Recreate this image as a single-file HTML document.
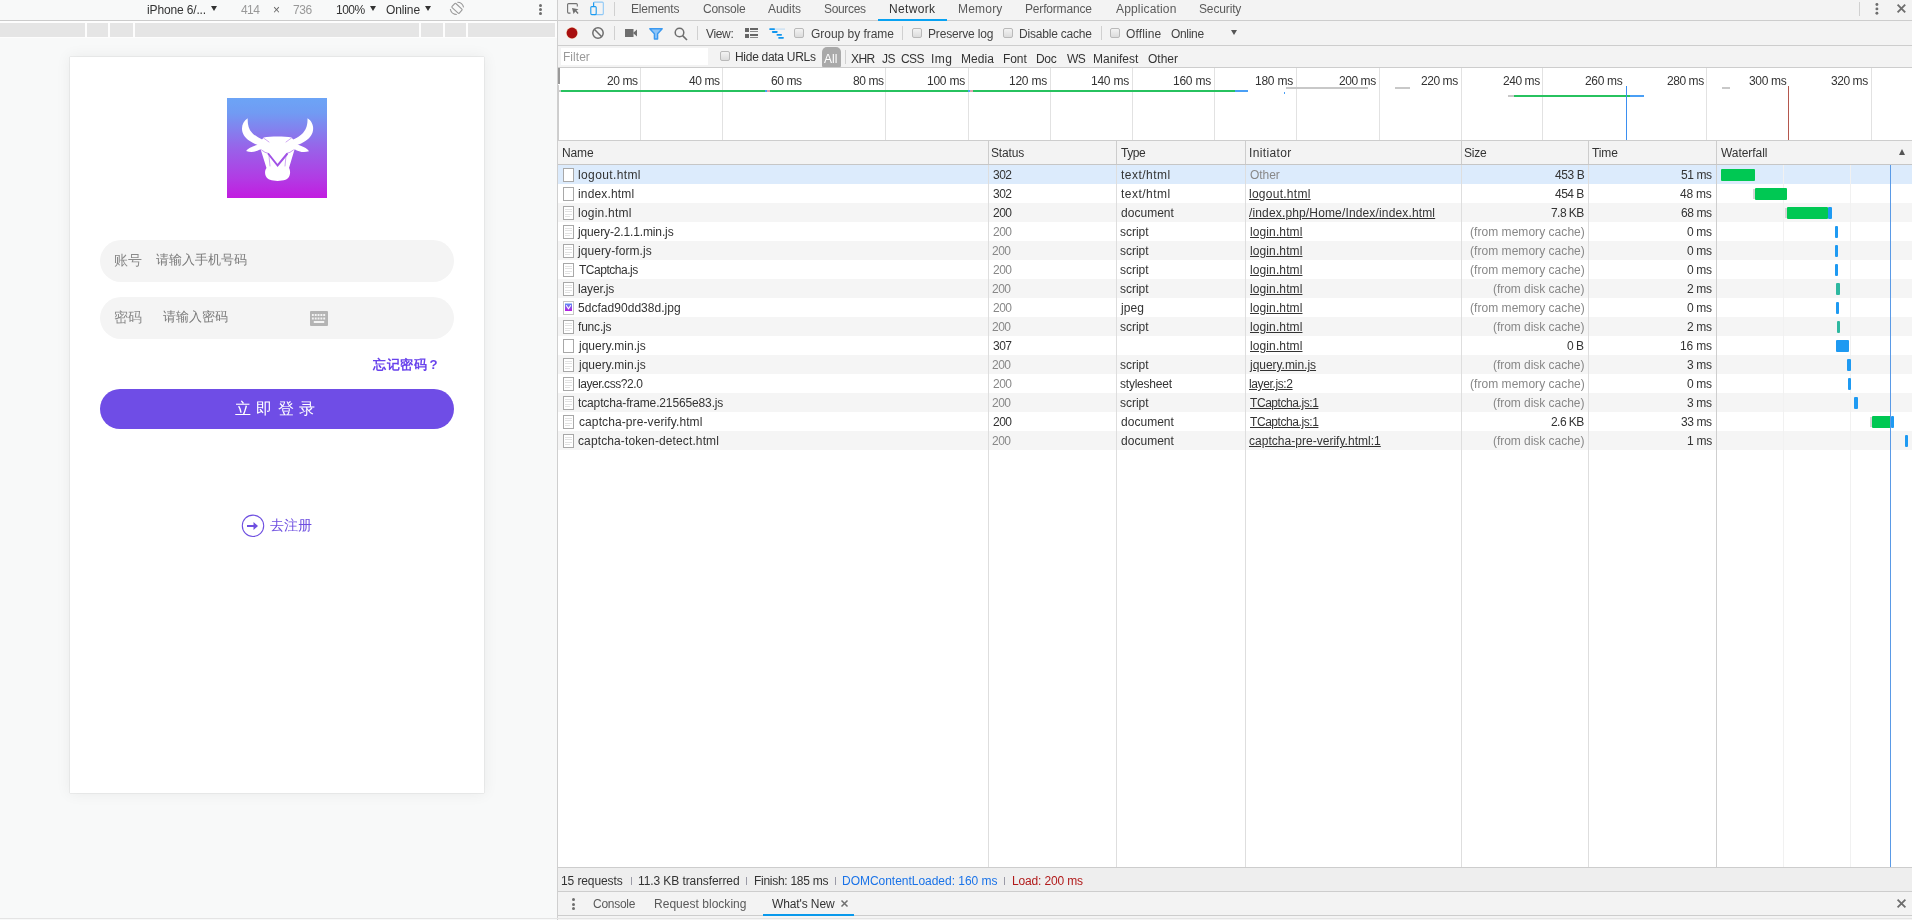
<!DOCTYPE html><html><head><meta charset="utf-8"><style>
html,body{margin:0;padding:0;width:1912px;height:920px;overflow:hidden;background:#f8f9f9;}
body{position:relative;font-family:"Liberation Sans",sans-serif;}
.t{position:absolute;white-space:nowrap;line-height:14px;font-size:12px;will-change:transform;}
.b{position:absolute;}
svg{position:absolute;}
u{text-decoration:underline;}
</style></head><body>
<div class="b" style="left:0px;top:0px;width:557px;height:920px;background:#f8f9f9"></div>
<div class="b" style="left:0px;top:20px;width:557px;height:1px;background:#cbcbcb"></div>
<div class="b" style="left:0px;top:21px;width:557px;height:17px;background:#fdfdfd"></div>
<div class="b" style="left:0px;top:23px;width:85px;height:14px;background:#e5e5e5"></div>
<div class="b" style="left:87px;top:23px;width:21px;height:14px;background:#e5e5e5"></div>
<div class="b" style="left:110px;top:23px;width:23px;height:14px;background:#e5e5e5"></div>
<div class="b" style="left:135px;top:23px;width:284px;height:14px;background:#e5e5e5"></div>
<div class="b" style="left:421px;top:23px;width:22px;height:14px;background:#e5e5e5"></div>
<div class="b" style="left:445px;top:23px;width:21px;height:14px;background:#e5e5e5"></div>
<div class="b" style="left:468px;top:23px;width:87px;height:14px;background:#e5e5e5"></div>
<div class="t" style="left:146.90px;top:3px;color:#333;font-size:12px;letter-spacing:-0.145px;">iPhone 6/...</div>
<div class="b" style="left:211px;top:6px;width:0;height:0;border-left:3.0px solid transparent;border-right:3.0px solid transparent;border-top:5px solid #333"></div>
<div class="t" style="left:241.00px;top:3px;color:#999;font-size:12px;letter-spacing:-0.550px;">414</div>
<div class="t" style="left:273.00px;top:3px;color:#666;font-size:12px;">&#215;</div>
<div class="t" style="left:292.80px;top:3px;color:#999;font-size:12px;letter-spacing:-0.400px;">736</div>
<div class="t" style="left:335.70px;top:3px;color:#333;font-size:12px;letter-spacing:-0.517px;">100%</div>
<div class="b" style="left:370px;top:6px;width:0;height:0;border-left:3.0px solid transparent;border-right:3.0px solid transparent;border-top:5px solid #333"></div>
<div class="t" style="left:385.80px;top:3px;color:#333;font-size:12px;letter-spacing:-0.120px;">Online</div>
<div class="b" style="left:425px;top:6px;width:0;height:0;border-left:3.0px solid transparent;border-right:3.0px solid transparent;border-top:5px solid #333"></div>
<svg style="left:446px;top:0px" width="22" height="18" viewBox="0 0 22 18"><g fill="none" stroke="#9a9a9a" stroke-width="1.1"><rect x="6.1" y="5.55" width="9.8" height="5.5" rx="0.8" transform="rotate(42.6 11 8.3)"/><path d="M11.3 2.2 A6.5 6.5 0 0 1 17.6 7.4 M4.3 9.2 A6.5 6.5 0 0 0 10.8 14.5"/></g></svg>
<div class="b" style="left:539px;top:4px;width:3px;height:3px;background:#6e6e6e;border-radius:50%"></div>
<div class="b" style="left:539px;top:8px;width:3px;height:3px;background:#6e6e6e;border-radius:50%"></div>
<div class="b" style="left:539px;top:12px;width:3px;height:3px;background:#6e6e6e;border-radius:50%"></div>
<div class="b" style="left:70px;top:57px;width:414px;height:736px;background:#fff;box-shadow:0 0 1px 0 rgba(0,0,0,0.25),0 0 14px 1px rgba(0,0,0,0.06)"></div>
<svg style="left:227px;top:98px" width="100" height="100" viewBox="0 0 100 100">
<defs><linearGradient id="lg" x1="0" y1="0" x2="0" y2="1"><stop offset="0" stop-color="#6ca4f6"/><stop offset="0.15" stop-color="#719bf3"/><stop offset="0.5" stop-color="#9863e9"/><stop offset="0.8" stop-color="#b13ce4"/><stop offset="1" stop-color="#c21ce0"/></linearGradient></defs>
<rect width="100" height="100" fill="url(#lg)"/>
<g fill="#fff">
<path d="M20.7 20.3 C13 25 12.5 37 22.8 43.1 C28 46.5 35 49 44 51 L46 45.5 C38 43 30 40 25.2 34.9 C21.5 31 20.5 26 20.7 20.3 Z"/>
<path d="M80.5 20.3 C88.2 25 88.7 37 78.4 43.1 C73.2 46.5 66.2 49 57.2 51 L55.2 45.5 C63.2 43 71.2 40 76 34.9 C79.7 31 80.7 26 80.5 20.3 Z"/>
<path d="M36.6 39.5 C44 38.2 57 38.2 64.6 39.5 L70 46.5 C75 48 80 50 82 53.3 C77 54.8 72 54 67.6 51.2 L62 70 C64 73 63.5 80 58.5 81.8 C54 83.3 47 83.3 43 81.8 C37.5 80 37 73 39.5 70 L33.6 51.2 C29 54 24 54.8 19.1 53 C21 50 26 48 31.2 46.5 Z"/>
</g>
<g fill="none" stroke="#a152e6" stroke-linecap="round">
<path d="M41.5 56 L50.6 67.5 L60 56" stroke-width="2"/>
<path d="M34.5 52 Q38 55 41.5 55.5 M66.5 52 Q63 55 59.5 55.5" stroke-width="0.6"/>
<path d="M42 58 L43 68 M59 58 L58 68" stroke-width="0.5"/>
<path d="M36.5 40 L42 44 M64.5 40 L59 44" stroke-width="0.5"/>
</g>
</svg>
<div class="b" style="left:100px;top:240px;width:354px;height:42px;background:#f4f4f4;border-radius:21px"></div>
<div class="b" style="left:100px;top:297px;width:354px;height:42px;background:#f4f4f4;border-radius:21px"></div>
<div class="t" style="left:114px;top:251px;font-size:14px;line-height:18px;color:#8a8a8a">账号</div>
<div class="t" style="left:156px;top:251px;font-size:14px;line-height:18px;color:#7a7a7a;font-size:13.4px">请输入手机号码</div>
<div class="t" style="left:114px;top:308px;font-size:14px;line-height:18px;color:#8a8a8a">密码</div>
<div class="t" style="left:163px;top:308px;font-size:14px;line-height:18px;color:#7a7a7a;font-size:13.4px">请输入密码</div>
<svg style="left:310px;top:311px" width="18" height="15" viewBox="0 0 19 15" preserveAspectRatio="none"><rect x="0" y="0" width="19" height="15" rx="1" fill="#b4b4b4"/>
<g fill="#f4f4f4"><rect x="2" y="3" width="2" height="2"/><rect x="5" y="3" width="2" height="2"/><rect x="8" y="3" width="2" height="2"/><rect x="11" y="3" width="2" height="2"/><rect x="14" y="3" width="2" height="2"/>
<rect x="2" y="6.5" width="2" height="2"/><rect x="5" y="6.5" width="2" height="2"/><rect x="8" y="6.5" width="2" height="2"/><rect x="11" y="6.5" width="2" height="2"/><rect x="14" y="6.5" width="2" height="2"/>
<rect x="4" y="10" width="11" height="2"/></g></svg>
<div class="t" style="left:373px;top:355.5px;font-size:13.2px;line-height:18px;color:#6842ec;font-weight:bold;letter-spacing:0.6px">忘记密码<span style="margin-left:2px">?</span></div>
<div class="b" style="left:100px;top:389px;width:354px;height:40px;background:#6f4de6;border-radius:20px"></div>
<div class="t" style="left:98px;width:354px;text-align:center;top:399px;font-size:16px;line-height:20px;color:#fff;letter-spacing:5.3px;text-indent:5.3px">立即登录</div>
<svg style="left:241px;top:514px" width="24" height="24" viewBox="0 0 24 24"><circle cx="12" cy="11.8" r="10.7" fill="none" stroke="#6e4fe0" stroke-width="1.1"/><path d="M6 12 H13.5" fill="none" stroke="#6e4fe0" stroke-width="2"/><path d="M12.5 8 L17 12 L12.5 16 Z" fill="#6e4fe0"/></svg>
<div class="t" style="left:270px;top:516px;font-size:14px;line-height:18px;color:#6e4fe0">去注册</div>
<div class="b" style="left:557px;top:0px;width:1px;height:920px;background:#cfcfcf"></div>
<div class="b" style="left:558px;top:0px;width:1354px;height:920px;background:#fff"></div>
<div class="b" style="left:558px;top:0px;width:1354px;height:20px;background:#f3f3f3"></div>
<div class="b" style="left:558px;top:20px;width:1354px;height:1px;background:#cdcdcd"></div>
<svg style="left:560px;top:0px" width="52" height="20" viewBox="0 0 52 20">
<path d="M10.5 13.1 H8.6 Q7.6 13.1 7.6 12.1 V4.6 Q7.6 3.6 8.6 3.6 H16.3 Q17.3 3.6 17.3 4.6 V6.6" fill="none" stroke="#707070" stroke-width="1.1"/>
<path d="M12 7.9 L18.5 9.3 L16.4 10.6 L18.6 13 L17.6 14 L15.3 11.6 L13.6 13.9 Z" fill="#707070"/>
<rect x="33.6" y="2.1" width="9.7" height="12.5" rx="1" fill="none" stroke="#8ec8f6" stroke-width="1.1"/>
<path d="M33.6 6.5 V2.6" stroke="#1a9af0" stroke-width="1.1"/>
<rect x="30.8" y="6.6" width="5.4" height="8" rx="1" fill="#f3f3f3" stroke="#1a9af0" stroke-width="1.1"/>
</svg>
<div class="b" style="left:614px;top:2px;width:1px;height:14px;background:#d0d0d0"></div>
<div class="t" style="left:630.80px;top:2px;color:#5a5a5a;font-size:12px;letter-spacing:-0.229px;">Elements</div>
<div class="t" style="left:703.00px;top:2px;color:#5a5a5a;font-size:12px;letter-spacing:-0.233px;">Console</div>
<div class="t" style="left:768.40px;top:2px;color:#5a5a5a;font-size:12px;letter-spacing:-0.080px;">Audits</div>
<div class="t" style="left:823.50px;top:2px;color:#5a5a5a;font-size:12px;letter-spacing:-0.333px;">Sources</div>
<div class="t" style="left:888.50px;top:2px;color:#333;font-size:12px;letter-spacing:0.333px;">Network</div>
<div class="t" style="left:957.90px;top:2px;color:#5a5a5a;font-size:12px;letter-spacing:0.200px;">Memory</div>
<div class="t" style="left:1024.80px;top:2px;color:#5a5a5a;font-size:12px;letter-spacing:-0.180px;">Performance</div>
<div class="t" style="left:1115.50px;top:2px;color:#5a5a5a;font-size:12px;letter-spacing:0.160px;">Application</div>
<div class="t" style="left:1198.90px;top:2px;color:#5a5a5a;font-size:12px;letter-spacing:-0.143px;">Security</div>
<div class="b" style="left:878px;top:19px;width:69px;height:2px;background:#08a2f2"></div>
<div class="b" style="left:1859px;top:2px;width:1px;height:14px;background:#d0d0d0"></div>
<svg style="left:1870px;top:0px" width="42" height="20" viewBox="0 0 42 20"><g fill="#6e6e6e"><circle cx="6.9" cy="4.5" r="1.45"/><circle cx="6.9" cy="8.9" r="1.45"/><circle cx="6.9" cy="13.3" r="1.45"/></g><path d="M27.6 4.7 L35.2 12.3 M35.2 4.7 L27.6 12.3" stroke="#6e6e6e" stroke-width="1.9"/></svg>
<div class="b" style="left:558px;top:21px;width:1354px;height:24px;background:#f3f3f3"></div>
<div class="b" style="left:558px;top:45px;width:1354px;height:1px;background:#cdcdcd"></div>
<svg style="left:565px;top:26px" width="14" height="14" viewBox="0 0 14 14"><circle cx="7" cy="7" r="6" fill="#f6d9c0"/><circle cx="7" cy="7" r="5.4" fill="#a80f0f"/></svg>
<svg style="left:591px;top:26px" width="14" height="14" viewBox="0 0 14 14"><circle cx="7" cy="7" r="5.2" fill="none" stroke="#6e6e6e" stroke-width="1.5"/><path d="M3.3 3.3 L10.7 10.7" stroke="#6e6e6e" stroke-width="1.5"/></svg>
<div class="b" style="left:614px;top:26px;width:1px;height:14px;background:#d0d0d0"></div>
<svg style="left:625px;top:29px" width="12" height="8" viewBox="0 0 12 8"><rect x="0" y="0" width="8.5" height="8" fill="#6e6e6e"/><path d="M8 4 L12 0.5 V7.5 Z" fill="#6e6e6e"/></svg>
<svg style="left:649px;top:28px" width="14" height="12" viewBox="0 0 14 12"><path d="M0.8 0.8 H13.2 L8.6 5.8 V11 H5.4 V5.8 Z" fill="#8ec5f8" stroke="#3b99f0" stroke-width="1.4" stroke-linejoin="round"/></svg>
<svg style="left:674px;top:27px" width="14" height="14" viewBox="0 0 14 14"><circle cx="5.5" cy="5.5" r="4.3" fill="none" stroke="#6e6e6e" stroke-width="1.5"/><path d="M8.6 8.6 L13 13" stroke="#6e6e6e" stroke-width="1.6"/></svg>
<div class="b" style="left:697px;top:26px;width:1px;height:14px;background:#d0d0d0"></div>
<div class="t" style="left:706.20px;top:27px;color:#444;font-size:12px;letter-spacing:-0.350px;">View:</div>
<svg style="left:740px;top:24px" width="50" height="18" viewBox="0 0 50 18"><g fill="#666"><rect x="5" y="4" width="4" height="4"/><rect x="10" y="4" width="8" height="2"/><rect x="5" y="10" width="4" height="4"/><rect x="10" y="10" width="8" height="2"/></g><g fill="#8a8a8a"><rect x="10" y="7" width="8" height="1"/><rect x="10" y="13" width="8" height="1"/></g><rect x="35" y="4.3" width="10" height="1.6" fill="#cfe3f3"/><g fill="#1196ee"><rect x="29.2" y="4.3" width="5.8" height="1.8" rx="0.8"/><rect x="31.9" y="7" width="5.8" height="1.9" rx="0.8"/><rect x="36.5" y="10" width="5.5" height="1.8" rx="0.8"/><rect x="38.2" y="12.9" width="5.7" height="1.8" rx="0.8"/></g></svg>
<div class="b" style="left:794px;top:28px;width:8px;height:8px;background:linear-gradient(#f3f3f3,#dcdcdc);border:1px solid #b9b9b9;border-radius:2px"></div>
<div class="t" style="left:811.20px;top:27px;color:#444;font-size:12px;letter-spacing:-0.031px;">Group by frame</div>
<div class="b" style="left:902px;top:26px;width:1px;height:14px;background:#d0d0d0"></div>
<div class="b" style="left:912px;top:28px;width:8px;height:8px;background:linear-gradient(#f3f3f3,#dcdcdc);border:1px solid #b9b9b9;border-radius:2px"></div>
<div class="t" style="left:927.70px;top:27px;color:#444;font-size:12px;letter-spacing:-0.182px;">Preserve log</div>
<div class="b" style="left:1003px;top:28px;width:8px;height:8px;background:linear-gradient(#f3f3f3,#dcdcdc);border:1px solid #b9b9b9;border-radius:2px"></div>
<div class="t" style="left:1018.70px;top:27px;color:#444;font-size:12px;letter-spacing:-0.200px;">Disable cache</div>
<div class="b" style="left:1101px;top:26px;width:1px;height:14px;background:#d0d0d0"></div>
<div class="b" style="left:1110px;top:28px;width:8px;height:8px;background:linear-gradient(#f3f3f3,#dcdcdc);border:1px solid #b9b9b9;border-radius:2px"></div>
<div class="t" style="left:1125.90px;top:27px;color:#444;font-size:12px;letter-spacing:0.133px;">Offline</div>
<div class="t" style="left:1170.60px;top:27px;color:#444;font-size:12px;letter-spacing:-0.320px;">Online</div>
<div class="b" style="left:1231px;top:30px;width:0;height:0;border-left:3.0px solid transparent;border-right:3.0px solid transparent;border-top:5px solid #555"></div>
<div class="b" style="left:558px;top:46px;width:1354px;height:21px;background:#f3f3f3"></div>
<div class="b" style="left:558px;top:67px;width:1354px;height:1px;background:#cdcdcd"></div>
<div class="b" style="left:561px;top:48px;width:147px;height:17px;background:#fff"></div>
<div class="t" style="left:563.30px;top:50px;color:#9a9a9a;font-size:12px;letter-spacing:0.040px;">Filter</div>
<div class="b" style="left:720px;top:51px;width:8px;height:8px;background:linear-gradient(#f3f3f3,#dcdcdc);border:1px solid #b9b9b9;border-radius:2px"></div>
<div class="t" style="left:735.30px;top:50px;color:#333;font-size:12px;letter-spacing:-0.292px;">Hide data URLs</div>
<div class="b" style="left:822px;top:47px;width:19px;height:20px;background:#a9a9a9;border-radius:5px 5px 1px 1px"></div>
<div class="t" style="left:824.00px;top:52px;color:#fff;font-size:12px;">All</div>
<div class="b" style="left:845px;top:50px;width:1px;height:14px;background:#d0d0d0"></div>
<div class="t" style="left:851.00px;top:52px;color:#333;font-size:12px;letter-spacing:-0.550px;">XHR</div>
<div class="t" style="left:882.00px;top:52px;color:#333;font-size:12px;letter-spacing:-0.550px;">JS</div>
<div class="t" style="left:901.00px;top:52px;color:#333;font-size:12px;letter-spacing:-0.550px;">CSS</div>
<div class="t" style="left:931.10px;top:52px;color:#333;font-size:12px;letter-spacing:0.400px;">Img</div>
<div class="t" style="left:961.30px;top:52px;color:#333;font-size:12px;letter-spacing:0.050px;">Media</div>
<div class="t" style="left:1003.10px;top:52px;color:#333;font-size:12px;letter-spacing:-0.067px;">Font</div>
<div class="t" style="left:1036.00px;top:52px;color:#333;font-size:12px;letter-spacing:-0.350px;">Doc</div>
<div class="t" style="left:1066.50px;top:52px;color:#333;font-size:12px;letter-spacing:-0.550px;">WS</div>
<div class="t" style="left:1092.50px;top:52px;color:#333;font-size:12px;">Manifest</div>
<div class="t" style="left:1148.40px;top:52px;color:#333;font-size:12px;">Other</div>
<div class="b" style="left:558px;top:68px;width:1354px;height:72px;background:#fff"></div>
<div class="b" style="left:558px;top:140px;width:1354px;height:1px;background:#cdcdcd"></div>
<div class="b" style="left:558px;top:68px;width:2px;height:16px;background:#999"></div>
<div class="b" style="left:558px;top:85px;width:1px;height:55px;background:#cdcdcd"></div>
<div class="b" style="left:559px;top:90px;width:2px;height:2px;background:#c8c8c8"></div>
<div class="b" style="left:640px;top:68px;width:1px;height:72px;background:#e2e2e2"></div>
<div class="b" style="left:722px;top:68px;width:1px;height:72px;background:#e2e2e2"></div>
<div class="b" style="left:885px;top:68px;width:1px;height:72px;background:#e2e2e2"></div>
<div class="b" style="left:968px;top:68px;width:1px;height:72px;background:#e2e2e2"></div>
<div class="b" style="left:1050px;top:68px;width:1px;height:72px;background:#e2e2e2"></div>
<div class="b" style="left:1132px;top:68px;width:1px;height:72px;background:#e2e2e2"></div>
<div class="b" style="left:1214px;top:68px;width:1px;height:72px;background:#e2e2e2"></div>
<div class="b" style="left:1296px;top:68px;width:1px;height:72px;background:#e2e2e2"></div>
<div class="b" style="left:1379px;top:68px;width:1px;height:72px;background:#e2e2e2"></div>
<div class="b" style="left:1461px;top:68px;width:1px;height:72px;background:#e2e2e2"></div>
<div class="b" style="left:1542px;top:68px;width:1px;height:72px;background:#e2e2e2"></div>
<div class="b" style="left:1706px;top:68px;width:1px;height:72px;background:#e2e2e2"></div>
<div class="b" style="left:1871px;top:68px;width:1px;height:72px;background:#e2e2e2"></div>
<div class="t" style="right:1274.80px;top:74px;color:#333;font-size:12px;letter-spacing:-0.400px;">20 ms</div>
<div class="t" style="right:1192.80px;top:74px;color:#333;font-size:12px;letter-spacing:-0.400px;">40 ms</div>
<div class="t" style="right:1110.80px;top:74px;color:#333;font-size:12px;letter-spacing:-0.400px;">60 ms</div>
<div class="t" style="right:1028.80px;top:74px;color:#333;font-size:12px;letter-spacing:-0.400px;">80 ms</div>
<div class="t" style="right:946.80px;top:74px;color:#333;font-size:12px;letter-spacing:-0.240px;">100 ms</div>
<div class="t" style="right:864.80px;top:74px;color:#333;font-size:12px;letter-spacing:-0.240px;">120 ms</div>
<div class="t" style="right:782.80px;top:74px;color:#333;font-size:12px;letter-spacing:-0.240px;">140 ms</div>
<div class="t" style="right:700.80px;top:74px;color:#333;font-size:12px;letter-spacing:-0.240px;">160 ms</div>
<div class="t" style="right:618.80px;top:74px;color:#333;font-size:12px;letter-spacing:-0.240px;">180 ms</div>
<div class="t" style="right:535.80px;top:74px;color:#333;font-size:12px;letter-spacing:-0.440px;">200 ms</div>
<div class="t" style="right:453.80px;top:74px;color:#333;font-size:12px;letter-spacing:-0.440px;">220 ms</div>
<div class="t" style="right:371.80px;top:74px;color:#333;font-size:12px;letter-spacing:-0.440px;">240 ms</div>
<div class="t" style="right:289.60px;top:74px;color:#333;font-size:12px;letter-spacing:-0.320px;">260 ms</div>
<div class="t" style="right:207.80px;top:74px;color:#333;font-size:12px;letter-spacing:-0.440px;">280 ms</div>
<div class="t" style="right:125.60px;top:74px;color:#333;font-size:12px;letter-spacing:-0.320px;">300 ms</div>
<div class="t" style="right:43.80px;top:74px;color:#333;font-size:12px;letter-spacing:-0.440px;">320 ms</div>
<div class="b" style="left:561px;top:90px;width:204px;height:2px;background:#27c25f"></div>
<div class="b" style="left:765px;top:90px;width:2px;height:2px;background:#4a9ff5"></div>
<div class="b" style="left:767px;top:90px;width:3px;height:2px;background:#e0a0b0"></div>
<div class="b" style="left:770px;top:90px;width:198px;height:2px;background:#27c25f"></div>
<div class="b" style="left:968px;top:90px;width:2px;height:2px;background:#4a9ff5"></div>
<div class="b" style="left:970px;top:90px;width:3px;height:2px;background:#e0a0b0"></div>
<div class="b" style="left:973px;top:90px;width:262px;height:2px;background:#27c25f"></div>
<div class="b" style="left:1235px;top:90px;width:13px;height:2px;background:#4a9ff5"></div>
<div class="b" style="left:1284px;top:92px;width:1px;height:2px;background:#4a9ff5"></div>
<div class="b" style="left:1286px;top:87px;width:82px;height:2px;background:#c8c8c8"></div>
<div class="b" style="left:1395px;top:87px;width:15px;height:2px;background:#c8c8c8"></div>
<div class="b" style="left:1508px;top:95px;width:6px;height:2px;background:#c8c8c8"></div>
<div class="b" style="left:1514px;top:95px;width:116px;height:2px;background:#27c25f"></div>
<div class="b" style="left:1630px;top:95px;width:14px;height:2px;background:#4a9ff5"></div>
<div class="b" style="left:1722px;top:87px;width:8px;height:2px;background:#c8c8c8"></div>
<div class="b" style="left:1626px;top:86px;width:1px;height:54px;background:#3b8ff0"></div>
<div class="b" style="left:1788px;top:86px;width:1px;height:54px;background:#b5574d"></div>
<div class="b" style="left:558px;top:141px;width:1354px;height:23px;background:#f3f3f3"></div>
<div class="b" style="left:558px;top:164px;width:1354px;height:1px;background:#c6c6c6"></div>
<div class="b" style="left:988px;top:141px;width:1px;height:23px;background:#cdcdcd"></div>
<div class="b" style="left:1116px;top:141px;width:1px;height:23px;background:#cdcdcd"></div>
<div class="b" style="left:1245px;top:141px;width:1px;height:23px;background:#cdcdcd"></div>
<div class="b" style="left:1461px;top:141px;width:1px;height:23px;background:#cdcdcd"></div>
<div class="b" style="left:1588px;top:141px;width:1px;height:23px;background:#cdcdcd"></div>
<div class="b" style="left:1716px;top:141px;width:1px;height:23px;background:#cdcdcd"></div>
<div class="t" style="left:561.70px;top:146px;color:#333;font-size:12px;letter-spacing:-0.150px;">Name</div>
<div class="t" style="left:991.30px;top:146px;color:#333;font-size:12px;letter-spacing:-0.160px;">Status</div>
<div class="t" style="left:1121.15px;top:146px;color:#333;font-size:12px;letter-spacing:-0.450px;">Type</div>
<div class="t" style="left:1248.75px;top:146px;color:#333;font-size:12px;letter-spacing:0.375px;">Initiator</div>
<div class="t" style="left:1464.00px;top:146px;color:#333;font-size:12px;letter-spacing:-0.217px;">Size</div>
<div class="t" style="left:1591.80px;top:146px;color:#333;font-size:12px;letter-spacing:-0.133px;">Time</div>
<div class="t" style="left:1720.60px;top:146px;color:#333;font-size:12px;letter-spacing:-0.050px;">Waterfall</div>
<div class="b" style="left:1899px;top:149px;width:0;height:0;border-left:3.5px solid transparent;border-right:3.5px solid transparent;border-bottom:6px solid #555"></div>
<div class="b" style="left:558px;top:165px;width:1354px;height:19px;background:#dcebfc"></div>
<svg style="left:563px;top:168px" width="11" height="14" viewBox="0 0 11 14"><rect x="0.5" y="0.5" width="10" height="13" fill="#fff" stroke="#a8a8a8"/></svg>
<div class="t" style="left:578.35px;top:168px;color:#333;font-size:12px;letter-spacing:0.380px;">logout.html</div>
<div class="t" style="left:992.60px;top:168px;color:#333;font-size:12px;letter-spacing:-0.500px;">302</div>
<div class="t" style="left:1120.50px;top:168px;color:#333;font-size:12px;letter-spacing:0.475px;">text/html</div>
<div class="t" style="left:1249.90px;top:168px;color:#888;font-size:12px;letter-spacing:-0.050px;">Other</div>
<div class="t" style="right:328.00px;top:168px;color:#333;font-size:12px;letter-spacing:-0.400px;">453 B</div>
<div class="t" style="right:200.00px;top:168px;color:#333;font-size:12px;letter-spacing:-0.400px;">51 ms</div>
<svg style="left:563px;top:187px" width="11" height="14" viewBox="0 0 11 14"><rect x="0.5" y="0.5" width="10" height="13" fill="#fff" stroke="#a8a8a8"/></svg>
<div class="t" style="left:578.45px;top:187px;color:#333;font-size:12px;letter-spacing:0.156px;">index.html</div>
<div class="t" style="left:992.60px;top:187px;color:#333;font-size:12px;letter-spacing:-0.500px;">302</div>
<div class="t" style="left:1120.50px;top:187px;color:#333;font-size:12px;letter-spacing:0.475px;">text/html</div>
<div class="t" style="left:1249.20px;top:187px;color:#333;font-size:12px;letter-spacing:0.260px;"><u>logout.html</u></div>
<div class="t" style="right:328.00px;top:187px;color:#333;font-size:12px;letter-spacing:-0.500px;">454 B</div>
<div class="t" style="right:201.00px;top:187px;color:#333;font-size:12px;letter-spacing:-0.250px;">48 ms</div>
<div class="b" style="left:558px;top:203px;width:1354px;height:19px;background:#f5f5f5"></div>
<svg style="left:563px;top:206px" width="11" height="14" viewBox="0 0 11 14"><rect x="0.5" y="0.5" width="10" height="13" fill="#fff" stroke="#a8a8a8"/><g fill="#e2e2e2"><rect x="2" y="3" width="7" height="1"/><rect x="2" y="5" width="7" height="1"/><rect x="2" y="8" width="7" height="1"/><rect x="2" y="10" width="5" height="1"/></g></svg>
<div class="t" style="left:577.80px;top:206px;color:#333;font-size:12px;letter-spacing:0.222px;">login.html</div>
<div class="t" style="left:992.60px;top:206px;color:#333;font-size:12px;letter-spacing:-0.500px;">200</div>
<div class="t" style="left:1121.15px;top:206px;color:#333;font-size:12px;letter-spacing:0.029px;">document</div>
<div class="t" style="left:1249.45px;top:206px;color:#333;font-size:12px;letter-spacing:0.148px;"><u>/index.php/Home/Index/index.html</u></div>
<div class="t" style="right:328.00px;top:206px;color:#333;font-size:12px;letter-spacing:-0.550px;">7.8 KB</div>
<div class="t" style="right:200.00px;top:206px;color:#333;font-size:12px;letter-spacing:-0.400px;">68 ms</div>
<svg style="left:563px;top:225px" width="11" height="14" viewBox="0 0 11 14"><rect x="0.5" y="0.5" width="10" height="13" fill="#fff" stroke="#a8a8a8"/><g fill="#e2e2e2"><rect x="2" y="3" width="7" height="1"/><rect x="2" y="5" width="7" height="1"/><rect x="2" y="8" width="7" height="1"/><rect x="2" y="10" width="5" height="1"/></g></svg>
<div class="t" style="left:578.15px;top:225px;color:#333;font-size:12px;letter-spacing:-0.133px;">jquery-2.1.1.min.js</div>
<div class="t" style="left:992.60px;top:225px;color:#888;font-size:12px;letter-spacing:-0.500px;">200</div>
<div class="t" style="left:1120.25px;top:225px;color:#333;font-size:12px;letter-spacing:-0.040px;">script</div>
<div class="t" style="left:1249.60px;top:225px;color:#333;font-size:12px;letter-spacing:0.111px;"><u>login.html</u></div>
<div class="t" style="right:327.00px;top:225px;color:#888;font-size:12px;letter-spacing:0.044px;">(from memory cache)</div>
<div class="t" style="right:200.00px;top:225px;color:#333;font-size:12px;letter-spacing:-0.317px;">0 ms</div>
<div class="b" style="left:558px;top:241px;width:1354px;height:19px;background:#f5f5f5"></div>
<svg style="left:563px;top:244px" width="11" height="14" viewBox="0 0 11 14"><rect x="0.5" y="0.5" width="10" height="13" fill="#fff" stroke="#a8a8a8"/><g fill="#e2e2e2"><rect x="2" y="3" width="7" height="1"/><rect x="2" y="5" width="7" height="1"/><rect x="2" y="8" width="7" height="1"/><rect x="2" y="10" width="5" height="1"/></g></svg>
<div class="t" style="left:578.30px;top:244px;color:#333;font-size:12px;letter-spacing:0.077px;">jquery-form.js</div>
<div class="t" style="left:992.10px;top:244px;color:#888;font-size:12px;letter-spacing:-0.500px;">200</div>
<div class="t" style="left:1120.25px;top:244px;color:#333;font-size:12px;letter-spacing:-0.040px;">script</div>
<div class="t" style="left:1249.60px;top:244px;color:#333;font-size:12px;letter-spacing:0.111px;"><u>login.html</u></div>
<div class="t" style="right:327.00px;top:244px;color:#888;font-size:12px;letter-spacing:0.044px;">(from memory cache)</div>
<div class="t" style="right:200.00px;top:244px;color:#333;font-size:12px;letter-spacing:-0.317px;">0 ms</div>
<svg style="left:563px;top:263px" width="11" height="14" viewBox="0 0 11 14"><rect x="0.5" y="0.5" width="10" height="13" fill="#fff" stroke="#a8a8a8"/><g fill="#e2e2e2"><rect x="2" y="3" width="7" height="1"/><rect x="2" y="5" width="7" height="1"/><rect x="2" y="8" width="7" height="1"/><rect x="2" y="10" width="5" height="1"/></g></svg>
<div class="t" style="left:578.75px;top:263px;color:#333;font-size:12px;letter-spacing:-0.480px;">TCaptcha.js</div>
<div class="t" style="left:992.60px;top:263px;color:#888;font-size:12px;letter-spacing:-0.500px;">200</div>
<div class="t" style="left:1120.25px;top:263px;color:#333;font-size:12px;letter-spacing:-0.040px;">script</div>
<div class="t" style="left:1249.60px;top:263px;color:#333;font-size:12px;letter-spacing:0.111px;"><u>login.html</u></div>
<div class="t" style="right:327.00px;top:263px;color:#888;font-size:12px;letter-spacing:0.044px;">(from memory cache)</div>
<div class="t" style="right:200.00px;top:263px;color:#333;font-size:12px;letter-spacing:-0.317px;">0 ms</div>
<div class="b" style="left:558px;top:279px;width:1354px;height:19px;background:#f5f5f5"></div>
<svg style="left:563px;top:282px" width="11" height="14" viewBox="0 0 11 14"><rect x="0.5" y="0.5" width="10" height="13" fill="#fff" stroke="#a8a8a8"/><g fill="#e2e2e2"><rect x="2" y="3" width="7" height="1"/><rect x="2" y="5" width="7" height="1"/><rect x="2" y="8" width="7" height="1"/><rect x="2" y="10" width="5" height="1"/></g></svg>
<div class="t" style="left:577.80px;top:282px;color:#333;font-size:12px;letter-spacing:-0.143px;">layer.js</div>
<div class="t" style="left:992.10px;top:282px;color:#888;font-size:12px;letter-spacing:-0.500px;">200</div>
<div class="t" style="left:1120.25px;top:282px;color:#333;font-size:12px;letter-spacing:-0.040px;">script</div>
<div class="t" style="left:1249.60px;top:282px;color:#333;font-size:12px;letter-spacing:0.111px;"><u>login.html</u></div>
<div class="t" style="right:328.00px;top:282px;color:#888;font-size:12px;letter-spacing:-0.038px;">(from disk cache)</div>
<div class="t" style="right:200.00px;top:282px;color:#333;font-size:12px;letter-spacing:-0.317px;">2 ms</div>
<svg style="left:563px;top:301px" width="11" height="14" viewBox="0 0 11 14"><rect x="0.5" y="0.5" width="10" height="13" fill="#fff" stroke="#c6c6c6"/><defs><linearGradient id="jg7" x1="0" y1="0" x2="0" y2="1"><stop offset="0" stop-color="#5c8ff5"/><stop offset="1" stop-color="#b81ae0"/></linearGradient></defs><rect x="2" y="2.5" width="7" height="7.5" fill="url(#jg7)"/><path d="M3.2 4.3 L5.5 7.8 L7.8 4.3" stroke="#fff" stroke-width="1.1" fill="none"/></svg>
<div class="t" style="left:578.40px;top:301px;color:#333;font-size:12px;letter-spacing:0.038px;">5dcfad90dd38d.jpg</div>
<div class="t" style="left:992.60px;top:301px;color:#888;font-size:12px;letter-spacing:-0.500px;">200</div>
<div class="t" style="left:1120.90px;top:301px;color:#333;font-size:12px;letter-spacing:0.067px;">jpeg</div>
<div class="t" style="left:1249.60px;top:301px;color:#333;font-size:12px;letter-spacing:0.111px;"><u>login.html</u></div>
<div class="t" style="right:327.00px;top:301px;color:#888;font-size:12px;letter-spacing:0.044px;">(from memory cache)</div>
<div class="t" style="right:200.00px;top:301px;color:#333;font-size:12px;letter-spacing:-0.317px;">0 ms</div>
<div class="b" style="left:558px;top:317px;width:1354px;height:19px;background:#f5f5f5"></div>
<svg style="left:563px;top:320px" width="11" height="14" viewBox="0 0 11 14"><rect x="0.5" y="0.5" width="10" height="13" fill="#fff" stroke="#a8a8a8"/><g fill="#e2e2e2"><rect x="2" y="3" width="7" height="1"/><rect x="2" y="5" width="7" height="1"/><rect x="2" y="8" width="7" height="1"/><rect x="2" y="10" width="5" height="1"/></g></svg>
<div class="t" style="left:577.85px;top:320px;color:#333;font-size:12px;letter-spacing:-0.200px;">func.js</div>
<div class="t" style="left:992.10px;top:320px;color:#888;font-size:12px;letter-spacing:-0.500px;">200</div>
<div class="t" style="left:1120.25px;top:320px;color:#333;font-size:12px;letter-spacing:-0.040px;">script</div>
<div class="t" style="left:1249.60px;top:320px;color:#333;font-size:12px;letter-spacing:0.111px;"><u>login.html</u></div>
<div class="t" style="right:328.00px;top:320px;color:#888;font-size:12px;letter-spacing:-0.038px;">(from disk cache)</div>
<div class="t" style="right:200.00px;top:320px;color:#333;font-size:12px;letter-spacing:-0.317px;">2 ms</div>
<svg style="left:563px;top:339px" width="11" height="14" viewBox="0 0 11 14"><rect x="0.5" y="0.5" width="10" height="13" fill="#fff" stroke="#a8a8a8"/></svg>
<div class="t" style="left:578.75px;top:339px;color:#333;font-size:12px;letter-spacing:0.017px;">jquery.min.js</div>
<div class="t" style="left:992.60px;top:339px;color:#333;font-size:12px;letter-spacing:-0.500px;">307</div>
<div class="t" style="left:1249.60px;top:339px;color:#333;font-size:12px;letter-spacing:0.111px;"><u>login.html</u></div>
<div class="t" style="right:329.00px;top:339px;color:#333;font-size:12px;letter-spacing:-0.550px;">0 B</div>
<div class="t" style="right:200.00px;top:339px;color:#333;font-size:12px;letter-spacing:-0.150px;">16 ms</div>
<div class="b" style="left:558px;top:355px;width:1354px;height:19px;background:#f5f5f5"></div>
<svg style="left:563px;top:358px" width="11" height="14" viewBox="0 0 11 14"><rect x="0.5" y="0.5" width="10" height="13" fill="#fff" stroke="#a8a8a8"/><g fill="#e2e2e2"><rect x="2" y="3" width="7" height="1"/><rect x="2" y="5" width="7" height="1"/><rect x="2" y="8" width="7" height="1"/><rect x="2" y="10" width="5" height="1"/></g></svg>
<div class="t" style="left:578.75px;top:358px;color:#333;font-size:12px;letter-spacing:0.017px;">jquery.min.js</div>
<div class="t" style="left:992.10px;top:358px;color:#888;font-size:12px;letter-spacing:-0.500px;">200</div>
<div class="t" style="left:1120.25px;top:358px;color:#333;font-size:12px;letter-spacing:-0.040px;">script</div>
<div class="t" style="left:1249.95px;top:358px;color:#333;font-size:12px;letter-spacing:-0.033px;"><u>jquery.min.js</u></div>
<div class="t" style="right:328.00px;top:358px;color:#888;font-size:12px;letter-spacing:-0.038px;">(from disk cache)</div>
<div class="t" style="right:200.00px;top:358px;color:#333;font-size:12px;letter-spacing:-0.317px;">3 ms</div>
<svg style="left:563px;top:377px" width="11" height="14" viewBox="0 0 11 14"><rect x="0.5" y="0.5" width="10" height="13" fill="#fff" stroke="#a8a8a8"/><g fill="#e2e2e2"><rect x="2" y="3" width="7" height="1"/><rect x="2" y="5" width="7" height="1"/><rect x="2" y="8" width="7" height="1"/><rect x="2" y="10" width="5" height="1"/></g></svg>
<div class="t" style="left:578.35px;top:377px;color:#333;font-size:12px;letter-spacing:-0.433px;">layer.css?2.0</div>
<div class="t" style="left:992.60px;top:377px;color:#888;font-size:12px;letter-spacing:-0.500px;">200</div>
<div class="t" style="left:1120.20px;top:377px;color:#333;font-size:12px;letter-spacing:-0.222px;">stylesheet</div>
<div class="t" style="left:1249.20px;top:377px;color:#333;font-size:12px;letter-spacing:-0.378px;"><u>layer.js:2</u></div>
<div class="t" style="right:327.00px;top:377px;color:#888;font-size:12px;letter-spacing:0.044px;">(from memory cache)</div>
<div class="t" style="right:200.00px;top:377px;color:#333;font-size:12px;letter-spacing:-0.317px;">0 ms</div>
<div class="b" style="left:558px;top:393px;width:1354px;height:19px;background:#f5f5f5"></div>
<svg style="left:563px;top:396px" width="11" height="14" viewBox="0 0 11 14"><rect x="0.5" y="0.5" width="10" height="13" fill="#fff" stroke="#a8a8a8"/><g fill="#e2e2e2"><rect x="2" y="3" width="7" height="1"/><rect x="2" y="5" width="7" height="1"/><rect x="2" y="8" width="7" height="1"/><rect x="2" y="10" width="5" height="1"/></g></svg>
<div class="t" style="left:577.90px;top:396px;color:#333;font-size:12px;letter-spacing:-0.136px;">tcaptcha-frame.21565e83.js</div>
<div class="t" style="left:992.10px;top:396px;color:#888;font-size:12px;letter-spacing:-0.500px;">200</div>
<div class="t" style="left:1120.25px;top:396px;color:#333;font-size:12px;letter-spacing:-0.040px;">script</div>
<div class="t" style="left:1249.90px;top:396px;color:#333;font-size:12px;letter-spacing:-0.433px;"><u>TCaptcha.js:1</u></div>
<div class="t" style="right:328.00px;top:396px;color:#888;font-size:12px;letter-spacing:-0.038px;">(from disk cache)</div>
<div class="t" style="right:200.00px;top:396px;color:#333;font-size:12px;letter-spacing:-0.317px;">3 ms</div>
<svg style="left:563px;top:415px" width="11" height="14" viewBox="0 0 11 14"><rect x="0.5" y="0.5" width="10" height="13" fill="#fff" stroke="#a8a8a8"/><g fill="#e2e2e2"><rect x="2" y="3" width="7" height="1"/><rect x="2" y="5" width="7" height="1"/><rect x="2" y="8" width="7" height="1"/><rect x="2" y="10" width="5" height="1"/></g></svg>
<div class="t" style="left:578.75px;top:415px;color:#333;font-size:12px;letter-spacing:0.100px;">captcha-pre-verify.html</div>
<div class="t" style="left:992.60px;top:415px;color:#333;font-size:12px;letter-spacing:-0.500px;">200</div>
<div class="t" style="left:1120.65px;top:415px;color:#333;font-size:12px;letter-spacing:0.029px;">document</div>
<div class="t" style="left:1249.90px;top:415px;color:#333;font-size:12px;letter-spacing:-0.433px;"><u>TCaptcha.js:1</u></div>
<div class="t" style="right:328.00px;top:415px;color:#333;font-size:12px;letter-spacing:-0.550px;">2.6 KB</div>
<div class="t" style="right:200.00px;top:415px;color:#333;font-size:12px;letter-spacing:-0.400px;">33 ms</div>
<div class="b" style="left:558px;top:431px;width:1354px;height:19px;background:#f5f5f5"></div>
<svg style="left:563px;top:434px" width="11" height="14" viewBox="0 0 11 14"><rect x="0.5" y="0.5" width="10" height="13" fill="#fff" stroke="#a8a8a8"/><g fill="#e2e2e2"><rect x="2" y="3" width="7" height="1"/><rect x="2" y="5" width="7" height="1"/><rect x="2" y="8" width="7" height="1"/><rect x="2" y="10" width="5" height="1"/></g></svg>
<div class="t" style="left:578.35px;top:434px;color:#333;font-size:12px;letter-spacing:0.117px;">captcha-token-detect.html</div>
<div class="t" style="left:992.10px;top:434px;color:#888;font-size:12px;letter-spacing:-0.500px;">200</div>
<div class="t" style="left:1121.15px;top:434px;color:#333;font-size:12px;letter-spacing:0.029px;">document</div>
<div class="t" style="left:1249.20px;top:434px;color:#333;font-size:12px;letter-spacing:0.025px;"><u>captcha-pre-verify.html:1</u></div>
<div class="t" style="right:328.00px;top:434px;color:#888;font-size:12px;letter-spacing:-0.038px;">(from disk cache)</div>
<div class="t" style="right:200.00px;top:434px;color:#333;font-size:12px;letter-spacing:-0.217px;">1 ms</div>
<div class="b" style="left:988px;top:165px;width:1px;height:702px;background:#dedede"></div>
<div class="b" style="left:1116px;top:165px;width:1px;height:702px;background:#dedede"></div>
<div class="b" style="left:1245px;top:165px;width:1px;height:702px;background:#dedede"></div>
<div class="b" style="left:1461px;top:165px;width:1px;height:702px;background:#dedede"></div>
<div class="b" style="left:1588px;top:165px;width:1px;height:702px;background:#dedede"></div>
<div class="b" style="left:1716px;top:165px;width:1px;height:702px;background:#cfcfcf"></div>
<div class="b" style="left:1783px;top:165px;width:1px;height:702px;background:#f1f1f1"></div>
<div class="b" style="left:1850px;top:165px;width:1px;height:702px;background:#f1f1f1"></div>
<div class="b" style="left:1721px;top:169px;width:34px;height:12px;background:#00c853;border-radius:1px"></div>
<div class="b" style="left:1755px;top:188px;width:32px;height:12px;background:#00c853;border-radius:1px"></div>
<div class="b" style="left:1787px;top:207px;width:41px;height:12px;background:#00c853;border-radius:1px"></div>
<div class="b" style="left:1828px;top:207px;width:4px;height:12px;background:#1e9af2;border-radius:1px"></div>
<div class="b" style="left:1835px;top:226px;width:3px;height:12px;background:#1e9af2;border-radius:1px"></div>
<div class="b" style="left:1835px;top:245px;width:3px;height:12px;background:#1e9af2;border-radius:1px"></div>
<div class="b" style="left:1835px;top:264px;width:3px;height:12px;background:#1e9af2;border-radius:1px"></div>
<div class="b" style="left:1836px;top:283px;width:4px;height:12px;background:#2eb8a0;border-radius:1px"></div>
<div class="b" style="left:1836px;top:302px;width:3px;height:12px;background:#1e9af2;border-radius:1px"></div>
<div class="b" style="left:1837px;top:321px;width:3px;height:12px;background:#2eb8a0;border-radius:1px"></div>
<div class="b" style="left:1836px;top:340px;width:13px;height:12px;background:#1e9af2;border-radius:1px"></div>
<div class="b" style="left:1847px;top:359px;width:4px;height:12px;background:#1e9af2;border-radius:1px"></div>
<div class="b" style="left:1848px;top:378px;width:3px;height:12px;background:#1e9af2;border-radius:1px"></div>
<div class="b" style="left:1854px;top:397px;width:4px;height:12px;background:#1e9af2;border-radius:1px"></div>
<div class="b" style="left:1872px;top:416px;width:19px;height:12px;background:#00c853;border-radius:1px"></div>
<div class="b" style="left:1891px;top:416px;width:3px;height:12px;background:#1e9af2;border-radius:1px"></div>
<div class="b" style="left:1905px;top:435px;width:3px;height:12px;background:#1e9af2;border-radius:1px"></div>
<div class="b" style="left:1753px;top:189px;width:2px;height:10px;background:#f4f4f4;border:0.5px solid #d6d6d6;box-sizing:border-box"></div>
<div class="b" style="left:1785px;top:208px;width:2px;height:10px;background:#f4f4f4;border:0.5px solid #d6d6d6;box-sizing:border-box"></div>
<div class="b" style="left:1870px;top:417px;width:2px;height:10px;background:#f4f4f4;border:0.5px solid #d6d6d6;box-sizing:border-box"></div>
<div class="b" style="left:1890px;top:165px;width:1px;height:702px;background:#5a9ae6"></div>
<div class="b" style="left:558px;top:867px;width:1354px;height:1px;background:#cdcdcd"></div>
<div class="b" style="left:558px;top:868px;width:1354px;height:23px;background:#eeeeee"></div>
<div class="b" style="left:558px;top:891px;width:1354px;height:1px;background:#cdcdcd"></div>
<div class="t" style="left:561.30px;top:874px;color:#333;font-size:12px;letter-spacing:-0.100px;">15 requests</div>
<div class="b" style="left:631px;top:877px;width:1px;height:8px;background:#9a9aa6"></div>
<div class="t" style="left:638.20px;top:874px;color:#333;font-size:12px;letter-spacing:-0.089px;">11.3 KB transferred</div>
<div class="b" style="left:746px;top:877px;width:1px;height:8px;background:#9a9aa6"></div>
<div class="t" style="left:753.70px;top:874px;color:#333;font-size:12px;letter-spacing:-0.277px;">Finish: 185 ms</div>
<div class="b" style="left:835px;top:877px;width:1px;height:8px;background:#9a9aa6"></div>
<div class="t" style="left:842.20px;top:874px;color:#1a73e8;font-size:12px;letter-spacing:-0.026px;">DOMContentLoaded: 160 ms</div>
<div class="b" style="left:1004px;top:877px;width:1px;height:8px;background:#9a9aa6"></div>
<div class="t" style="left:1011.50px;top:874px;color:#b11a1a;font-size:12px;letter-spacing:-0.145px;">Load: 200 ms</div>
<div class="b" style="left:558px;top:892px;width:1354px;height:23px;background:#f3f3f3"></div>
<div class="b" style="left:558px;top:915px;width:1354px;height:1px;background:#cdcdcd"></div>
<div class="b" style="left:558px;top:916px;width:1354px;height:4px;background:#f4f4f4"></div>
<div class="b" style="left:0px;top:918px;width:1912px;height:1px;background:#e4e4e4"></div>
<div class="b" style="left:572px;top:898px;width:3px;height:3px;background:#6e6e6e;border-radius:50%"></div>
<div class="b" style="left:572px;top:903px;width:3px;height:3px;background:#6e6e6e;border-radius:50%"></div>
<div class="b" style="left:572px;top:907px;width:3px;height:3px;background:#6e6e6e;border-radius:50%"></div>
<div class="t" style="left:592.60px;top:897px;color:#5a5a5a;font-size:12px;letter-spacing:-0.267px;">Console</div>
<div class="t" style="left:653.70px;top:897px;color:#5a5a5a;font-size:12px;letter-spacing:0.027px;">Request blocking</div>
<div class="t" style="left:772.30px;top:897px;color:#333;font-size:12px;letter-spacing:-0.111px;">What's New</div>
<svg style="left:840px;top:899px" width="9" height="9" viewBox="0 0 9 9"><path d="M1.5 1.5 L7.5 7.5 M7.5 1.5 L1.5 7.5" stroke="#6e6e6e" stroke-width="1.5"/></svg>
<div class="b" style="left:763px;top:914px;width:91px;height:2px;background:#0999ec"></div>
<svg style="left:1895px;top:897px" width="12" height="12" viewBox="0 0 12 12"><path d="M2.6 2.6 L10.4 10.4 M10.4 2.6 L2.6 10.4" stroke="#6e6e6e" stroke-width="1.8"/></svg>
</body></html>
